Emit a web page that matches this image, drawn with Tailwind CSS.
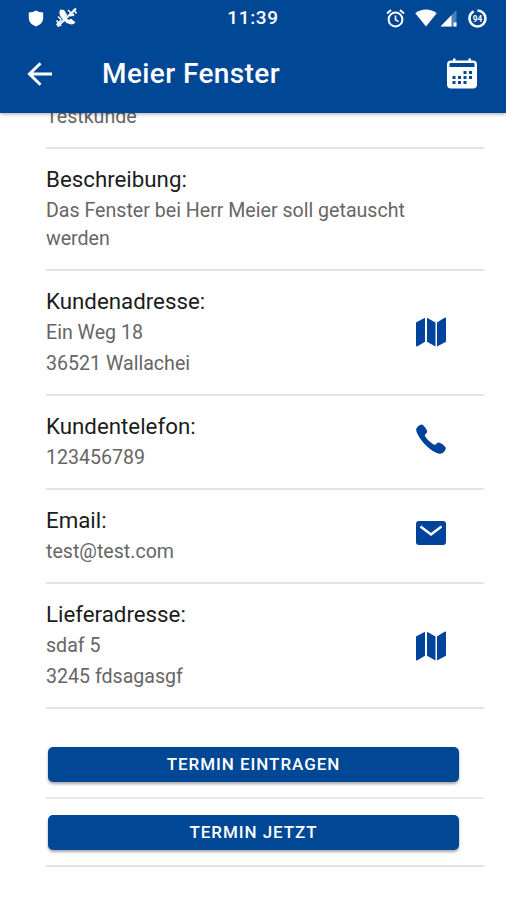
<!DOCTYPE html>
<html lang="de">

<head>
  <meta charset="UTF-8" />
  <meta name="viewport" content="width=device-width, initial-scale=1.0" />
  <title>Meier Fenster</title>
  <script src="https://cdn.jsdelivr.net/npm/@tailwindcss/browser@4"></script>
</head>

<body class="bg-white font-['Roboto',sans-serif] text-[#1c1c1c]">
  <div class="flex h-[900px] w-[506px] flex-col overflow-hidden">

    <!-- Header -->
    <header class="relative z-10 h-[113px] shrink-0 bg-[#004896] text-white shadow-[0_1px_4px_rgba(0,0,0,0.35)]">
      <!-- Status bar -->
      <div class="grid h-9 grid-cols-3 items-center px-7">
        <div class="flex items-center gap-[11px]">
          <svg class="h-[17px] w-4" viewBox="0 0 16 17" fill="currentColor">
            <path d="M8 .5Q11 2.5 15.2 2.5V8c0 4-3 7-7.2 8.5C3.8 15 .8 12 .8 8V2.500Q5 2.500 8 .5z" />
          </svg>
          <svg class="h-[22px] w-[23px]" viewBox="0 0 23 22" fill="none" stroke="currentColor">
            <path d="M6 3.500C4.500 5 5.500 9 9 12.500s8.500 5 10 3l-3-2.500-2.200 1c-2-.8-3.500-2.500-4.200-4.200L11 8 8.500 4z" fill="currentColor" stroke-width="2" />
            <path d="M2.500 19.500 21 1.500" stroke-width="2" />
            <path d="M1.500 13.500 6 19M1.500 18l5-5.500M3 9.500l3 3M13 3l6 6M18.500 2.500l3 4M15 9l4-2" stroke-width="1.500" />
          </svg>
        </div>
        <span class="text-center text-[19px] font-medium tracking-[0.7px]">11:39</span>
        <div class="-mr-[9px] flex items-center justify-end">
          <svg class="mr-[10px] h-[19px] w-[19px]" viewBox="0 0 19 19" fill="none" stroke="currentColor">
            <circle cx="9.500" cy="10.500" r="6.900" stroke-width="2" />
            <path d="M9.500 6.500v4.300l3 1.800" stroke-width="1.600" />
            <path d="m1 4.500 4-3.400M18 4.500l-4-3.400" stroke-width="2" />
          </svg>
          <svg class="mr-[3px] h-[18px] w-[22px]" viewBox="0 0 22 18" fill="currentColor">
            <path d="M11 17.500.3 4.300C3.500 1.800 7 .6 11 .6s7.500 1.200 10.700 3.700z" />
          </svg>
          <svg class="mr-[11px] h-[18px] w-[17px]" viewBox="0 0 17 18" fill="currentColor">
            <path d="M16.500 1v16.500H.5z" opacity=".3" />
            <path d="M11.500 6.200v11.300H.5z" />
            <path d="M13.500 13.500h3v4h-3z" />
          </svg>
          <svg class="h-[19px] w-[19px]" viewBox="0 0 19 19" fill="none" stroke="currentColor">
            <circle cx="9.500" cy="9.500" r="8" stroke-width="2.600" stroke-dasharray="46 4.300" transform="rotate(-90 9.500 9.500)" />
            <text x="9.500" y="13" text-anchor="middle" font-size="9.500" font-weight="700" fill="currentColor" stroke="none" textLength="9.500" lengthAdjust="spacingAndGlyphs">94</text>
          </svg>
        </div>
      </div>
      <!-- Toolbar -->
      <div class="flex h-[75px] items-center pr-[29px] pl-[27px]">
        <svg class="h-6 w-[25px]" viewBox="0 0 25 24" fill="none" stroke="currentColor" stroke-width="3">
          <path d="M25 12H2.500M13.500 1.200 2.500 12l11 10.800" />
        </svg>
        <h1 class="ml-[50px] grow pt-px text-[28px] font-medium tracking-[0.4px]">Meier Fenster</h1>
        <svg class="h-[31px] w-[30px]" viewBox="0 0 30 31">
          <path d="M4 2.500h2V.5h2.500v2h13v-2H24v2h2a4 4 0 0 1 4 4v20a4 4 0 0 1-4 4H4a4 4 0 0 1-4-4v-20a4 4 0 0 1 4-4z" fill="#fff" />
          <path d="M3.500 5h23a1 1 0 0 1 1 1v3h-25V6a1 1 0 0 1 1-1zM16.500 13h3v3h-3zM22 13h3v3h-3zM5.500 18h3v3h-3zM11 18h3v3h-3zM16.500 18h3v3h-3zM22 18h3v3h-3zM5.500 23h3v3h-3zM11 23h3v3h-3zM16.500 23h3v3h-3z" fill="#004896" />
        </svg>
      </div>
    </header>

    <!-- Order details -->
    <main class="flex flex-col pr-[22px] pl-[46px] text-[19.6px]">
      <section class="flex h-9 items-end border-b-2 border-[#e4e4e4] pb-4">
        <p class="leading-[28px] text-[#666]">Testkunde</p>
      </section>

      <section class="h-[122px] border-b-2 border-[#e4e4e4] pt-[15px]">
        <h2 class="text-[22.3px] leading-[31px]">Beschreibung:</h2>
        <p class="mt-[2px] w-[380px] leading-[28px] text-[#666]">Das Fenster bei Herr Meier soll getauscht werden</p>
      </section>

      <section class="flex h-[125px] items-center justify-between border-b-2 border-[#e4e4e4] pr-[38px]">
        <div>
          <h2 class="text-[22.3px] leading-[31px]">Kundenadresse:</h2>
          <p class="leading-[31px] text-[#666]">Ein Weg 18</p>
          <p class="leading-[31px] text-[#666]">36521 Wallachei</p>
        </div>
        <svg class="mb-[2px] h-[30px] w-[30px]" viewBox="0 0 30 30" fill="#00439a">
          <path d="M0 5.500 9 .8v24L1.500 29.300Q0 30 0 28.300zM11 .8l8.500 4.700v24L11 24.800zM21 5.500 28.500.8Q30 0 30 1.800v23l-9 4.700z" />
        </svg>
      </section>

      <section class="flex h-[94px] items-center justify-between border-b-2 border-[#e4e4e4] pr-[38px]">
        <div>
          <h2 class="text-[22.3px] leading-[31px]">Kundentelefon:</h2>
          <p class="leading-[31px] text-[#666]">123456789</p>
        </div>
        <svg class="mb-1.5 h-[30px] w-[30px]" viewBox="0 0 30 30" fill="#00439a">
          <path d="M24.300 29.800c-2.800 0-8.500-2.500-14.200-8.300C4.500 16 .2 9 .2 5.700c0-2.200 2.900-5 5.200-5.300 1.700-.2 5.800 5 5.800 7 0 1.700-2.300 2.600-2.400 3.700 0 1.500 2.800 4.700 4.500 6.200 1.500 1.300 4.300 3.500 5.600 3.500 1.200 0 2-2.400 3.700-2.400 2.100 0 7.400 4 7.200 5.900-.3 2.500-3 5.500-5.500 5.500z" />
        </svg>
      </section>

      <section class="flex h-[94px] items-center justify-between border-b-2 border-[#e4e4e4] pr-[38px]">
        <div>
          <h2 class="text-[22.3px] leading-[31px]">Email:</h2>
          <p class="leading-[31px] text-[#666]">test@test.com</p>
        </div>
        <svg class="mb-1.5 h-6 w-[30px]" viewBox="0 0 30 24">
          <rect width="30" height="24" rx="3" fill="#00439a" />
          <path d="m4.500 5.500 10.500 8 10.500-8" fill="none" stroke="#fff" stroke-width="2.500" />
        </svg>
      </section>

      <section class="flex h-[125px] items-center justify-between border-b-2 border-[#e4e4e4] pr-[38px]">
        <div>
          <h2 class="text-[22.3px] leading-[31px]">Lieferadresse:</h2>
          <p class="leading-[31px] text-[#666]">sdaf 5</p>
          <p class="leading-[31px] text-[#666]">3245 fdsagasgf</p>
        </div>
        <svg class="h-[30px] w-[30px]" viewBox="0 0 30 30" fill="#00439a">
          <path d="M0 5.500 9 .8v24L1.500 29.300Q0 30 0 28.300zM11 .8l8.500 4.700v24L11 24.800zM21 5.500 28.500.8Q30 0 30 1.800v23l-9 4.700z" />
        </svg>
      </section>

      <!-- Actions -->
      <div class="flex h-[90px] items-end border-b-2 border-[#e9e9e9] pr-[25px] pb-[15px] pl-[2px]">
        <button class="h-[35px] w-full rounded-[5px] bg-[#004896] text-[17px] font-medium tracking-[0.95px] text-white shadow-[0_2px_3px_rgba(0,0,0,0.35)]">TERMIN EINTRAGEN</button>
      </div>
      <div class="flex h-[68px] items-end border-b-2 border-[#e4e4e4] pr-[25px] pb-[15px] pl-[2px]">
        <button class="h-[35px] w-full rounded-[5px] bg-[#004896] text-[17px] font-medium tracking-[0.95px] text-white shadow-[0_2px_3px_rgba(0,0,0,0.35)]">TERMIN JETZT</button>
      </div>
    </main>
  </div>
</body>

</html>
